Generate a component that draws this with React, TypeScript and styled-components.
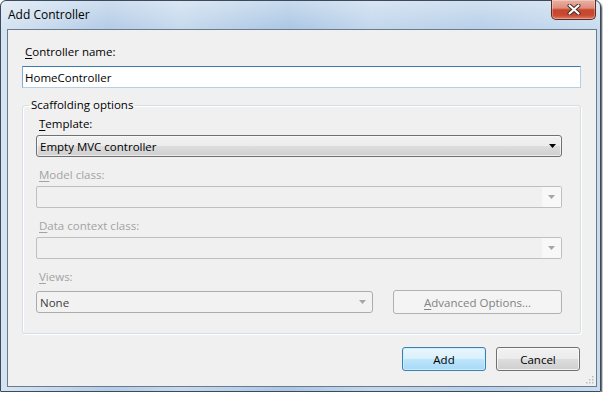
import React from "react";
import styled, { createGlobalStyle, css } from "styled-components";

const GlobalStyle = createGlobalStyle`
  html, body {
    margin: 0;
    background: #ffffff;
  }
  body {
    font-family: "Open Sans", "Noto Sans", sans-serif;
    font-size: 11.5px;
    color: #000;
  }
`;

const Window = styled.div`
  box-sizing: border-box;
  width: 601px;
  height: 392px;
  display: flex;
  flex-direction: column;
  border: 1px solid #3b4a5c;
  border-radius: 6px 6px 1px 1px;
  padding: 0 3px 4px 6px;
  background: linear-gradient(180deg, rgba(255, 255, 255, 0.35), rgba(255, 255, 255, 0) 28px),
    linear-gradient(
      90deg,
      #d6e4f2 0%,
      #b4cce6 18%,
      #c6d9ed 30%,
      #abc7e4 48%,
      #c3d7ec 62%,
      #b8d0e9 80%,
      #c9dcef 100%
    );
  box-shadow: 1px 2px 2px rgba(0, 0, 0, 0.75);
`;

const TitleBar = styled.div`
  height: 28px;
  display: flex;
  align-items: flex-start;
  justify-content: space-between;
`;

const Title = styled.div`
  margin: 6px 0 0 1px;
  line-height: 16px;
  font-size: 12px;
  color: #000;
`;

const CloseButton = styled.div`
  box-sizing: border-box;
  width: 45px;
  height: 20px;
  margin: -1px 1px 0 0;
  display: flex;
  align-items: center;
  justify-content: center;
  border: 1px solid #5e2b22;
  border-top: none;
  border-radius: 0 0 5px 5px;
  background: linear-gradient(
    180deg,
    #eab0a2 0%,
    #de8e7b 42%,
    #c8452c 52%,
    #c84a31 80%,
    #dc7d63 100%
  );
  box-shadow: inset 0 0 0 1px rgba(255, 255, 255, 0.3);
`;

const Client = styled.div`
  position: relative;
  flex: 1;
  display: flex;
  flex-direction: column;
  border: 1px solid #6a7b8e;
  background: #f0f0f0;
  padding: 14px 15px 0 14px;
`;

const Label = styled.div<{ $disabled?: boolean }>`
  line-height: 16px;
  padding-left: 3px;
  color: ${({ $disabled }) => ($disabled ? "#a3a3a3" : "#000")};
`;

const Key = styled.span`
  text-decoration: underline;
  text-underline-offset: 2px;
`;

const TextInput = styled.input`
  box-sizing: border-box;
  height: 22px;
  margin-top: 6px;
  padding: 0 2px;
  font: inherit;
  color: #000;
  background: #fff;
  border: 1px solid #b5cfe7;
  border-top-color: #3d7bad;
  border-left-color: #82aed3;
  outline: none;
`;

const Group = styled.fieldset`
  margin: 9px 0 0 0;
  padding: 0;
  min-width: 0;
  border: 1px solid #d5dfe5;
  border-radius: 3px;
  box-shadow: inset 1px 1px 0 #ffffff, 1px 1px 0 #ffffff;
`;

const Legend = styled.legend`
  margin-left: 6px;
  padding: 0 2px;
  line-height: 16px;
  color: #000;
`;

const GroupBody = styled.div`
  display: flex;
  flex-direction: column;
  padding: 3px 18px 19px 13px;
`;

const Field = styled.div<{ $first?: boolean }>`
  display: flex;
  flex-direction: column;
  gap: 3px;
  margin-top: ${({ $first }) => ($first ? "0" : "10px")};
`;

const ComboBase = css`
  box-sizing: border-box;
  height: 22px;
  display: flex;
  align-items: center;
  border-radius: 3px;
`;

const Combo = styled.div`
  ${ComboBase};
  padding: 0 5px 0 3px;
  justify-content: space-between;
  border: 1px solid #707070;
  background: linear-gradient(180deg, #f2f2f2 0%, #ebebeb 50%, #dddddd 50%, #cfcfcf 100%);
  box-shadow: inset 0 0 0 1px rgba(255, 255, 255, 0.6);
  color: #000;
`;

const DisabledCombo = styled.div`
  ${ComboBase};
  justify-content: flex-end;
  border: 1px solid #bfbfbf;
  border-radius: 2px;
  background: #f0f0f0;
`;

const DropCell = styled.div`
  width: 19px;
  height: 100%;
  display: flex;
  align-items: center;
  justify-content: center;
  background: #f8f8f8;
`;

const ViewsRow = styled.div`
  display: flex;
  align-items: center;
  justify-content: space-between;
  margin-top: 5px;
`;

const ViewsCombo = styled.div`
  ${ComboBase};
  width: 337px;
  padding: 0 6px 0 3px;
  justify-content: space-between;
  border: 1px solid #acacac;
  background: #f2f2f2;
  color: #404040;
`;

const buttonBase = css`
  box-sizing: border-box;
  height: 24px;
  display: flex;
  align-items: center;
  justify-content: center;
  border-radius: 3px;
  font: inherit;
  padding: 0;
`;

const AdvancedButton = styled.div`
  ${buttonBase};
  width: 169px;
  border: 1px solid #adb2b5;
  background: #f4f4f4;
  color: #838383;
`;

const ButtonRow = styled.div`
  display: flex;
  justify-content: flex-end;
  gap: 10px;
  margin: 13px 1px 0 0;
`;

const DialogButton = styled.button<{ $default?: boolean }>`
  ${buttonBase};
  width: 84px;
  color: #000;
  border: 1px solid ${({ $default }) => ($default ? "#3c7fb1" : "#707070")};
  background: ${({ $default }) =>
    $default
      ? "linear-gradient(180deg, #eaf6fd 0%, #d9f0fc 50%, #bee6fd 50%, #a7d9f5 100%)"
      : "linear-gradient(180deg, #f2f2f2 0%, #ebebeb 50%, #dddddd 50%, #cfcfcf 100%)"};
  box-shadow: inset 0 0 0 1px
    ${({ $default }) => ($default ? "rgba(200, 240, 255, 0.9)" : "rgba(255, 255, 255, 0.7)")};
`;

const Grip = styled.svg`
  position: absolute;
  right: 2px;
  bottom: 2px;
`;

function Arrow({ color }: { color: string }) {
  return (
    <svg width="7" height="4" viewBox="0 0 7 4">
      <polygon points="0,0 7,0 3.5,4" fill={color} />
    </svg>
  );
}

export default function App() {
  return (
    <>
      <GlobalStyle />
      <Window>
        <TitleBar>
          <Title>Add Controller</Title>
          <CloseButton>
            <svg width="14" height="11" viewBox="0 0 14 11">
              <path d="M2.5 1.5 L11.5 9.5 M11.5 1.5 L2.5 9.5" stroke="#3b2a28" strokeWidth="4" strokeLinecap="round" />
              <path d="M2.5 1.5 L11.5 9.5 M11.5 1.5 L2.5 9.5" stroke="#ffffff" strokeWidth="2.2" strokeLinecap="round" />
            </svg>
          </CloseButton>
        </TitleBar>
        <Client>
          <Label>
            <Key>C</Key>ontroller name:
          </Label>
          <TextInput defaultValue="HomeController" />
          <Group>
            <Legend>Scaffolding options</Legend>
            <GroupBody>
              <Field $first>
                <Label>
                  <Key>T</Key>emplate:
                </Label>
                <Combo>
                  <span>Empty MVC controller</span>
                  <Arrow color="#000" />
                </Combo>
              </Field>
              <Field>
                <Label $disabled>
                  <Key>M</Key>odel class:
                </Label>
                <DisabledCombo>
                  <DropCell>
                    <Arrow color="#a6a6a6" />
                  </DropCell>
                </DisabledCombo>
              </Field>
              <Field>
                <Label $disabled>
                  <Key>D</Key>ata context class:
                </Label>
                <DisabledCombo>
                  <DropCell>
                    <Arrow color="#a6a6a6" />
                  </DropCell>
                </DisabledCombo>
              </Field>
              <Field>
                <Label $disabled>
                  <Key>V</Key>iews:
                </Label>
              </Field>
              <ViewsRow>
                <ViewsCombo>
                  <span>None</span>
                  <Arrow color="#a6a6a6" />
                </ViewsCombo>
                <AdvancedButton>
                  <span>
                    <Key>A</Key>dvanced Options...
                  </span>
                </AdvancedButton>
              </ViewsRow>
            </GroupBody>
          </Group>
          <ButtonRow>
            <DialogButton $default>Add</DialogButton>
            <DialogButton>Cancel</DialogButton>
          </ButtonRow>
          <Grip width="9" height="9" viewBox="0 0 9 9">
            {[
              [7, 1],
              [4, 4],
              [7, 4],
              [1, 7],
              [4, 7],
              [7, 7],
            ].map(([x, y]) => (
              <rect key={`${x}-${y}`} x={x} y={y} width="1.5" height="1.5" fill="#b9bec4" />
            ))}
          </Grip>
        </Client>
      </Window>
    </>
  );
}
